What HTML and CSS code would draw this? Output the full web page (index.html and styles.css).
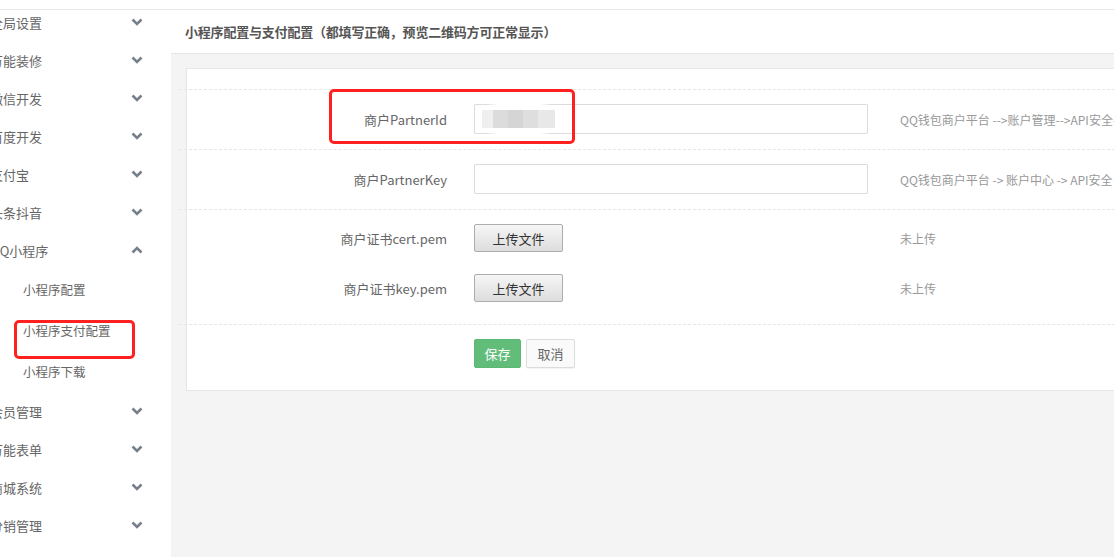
FILE: index.html
```html
<!DOCTYPE html>
<html lang="zh-CN">
<head>
    <meta charset="UTF-8">
    <title>小程序支付配置</title>
    <link rel="stylesheet" href="styles.css">
</head>
<body>
<div class="topbar"></div>
<div class="layout">
    <aside class="sidebar">
        <ul class="menu">
            <li class="menu-item"><span class="menu-label">全局设置</span><svg class="arrow" viewBox="0 0 12 8"><polyline points="1.5,1.5 6,6 10.5,1.5"/></svg></li>
            <li class="menu-item"><span class="menu-label">万能装修</span><svg class="arrow" viewBox="0 0 12 8"><polyline points="1.5,1.5 6,6 10.5,1.5"/></svg></li>
            <li class="menu-item"><span class="menu-label">微信开发</span><svg class="arrow" viewBox="0 0 12 8"><polyline points="1.5,1.5 6,6 10.5,1.5"/></svg></li>
            <li class="menu-item"><span class="menu-label">百度开发</span><svg class="arrow" viewBox="0 0 12 8"><polyline points="1.5,1.5 6,6 10.5,1.5"/></svg></li>
            <li class="menu-item"><span class="menu-label">支付宝</span><svg class="arrow" viewBox="0 0 12 8"><polyline points="1.5,1.5 6,6 10.5,1.5"/></svg></li>
            <li class="menu-item"><span class="menu-label">头条抖音</span><svg class="arrow" viewBox="0 0 12 8"><polyline points="1.5,1.5 6,6 10.5,1.5"/></svg></li>
            <li class="menu-item"><span class="menu-label">QQ小程序</span><svg class="arrow" viewBox="0 0 12 8"><polyline points="1.5,6.5 6,2 10.5,6.5"/></svg></li>
            <li class="sub-item">小程序配置</li>
            <li class="sub-item">小程序支付配置</li>
            <li class="sub-item">小程序下载</li>
            <li class="menu-item"><span class="menu-label">会员管理</span><svg class="arrow" viewBox="0 0 12 8"><polyline points="1.5,1.5 6,6 10.5,1.5"/></svg></li>
            <li class="menu-item"><span class="menu-label">万能表单</span><svg class="arrow" viewBox="0 0 12 8"><polyline points="1.5,1.5 6,6 10.5,1.5"/></svg></li>
            <li class="menu-item"><span class="menu-label">商城系统</span><svg class="arrow" viewBox="0 0 12 8"><polyline points="1.5,1.5 6,6 10.5,1.5"/></svg></li>
            <li class="menu-item"><span class="menu-label">分销管理</span><svg class="arrow" viewBox="0 0 12 8"><polyline points="1.5,1.5 6,6 10.5,1.5"/></svg></li>
        </ul>
    </aside>

    <main class="main">
        <div class="page-head">小程序配置与支付配置（都填写正确，预览二维码方可正常显示）</div>
        <div class="content">
            <div class="panel">
                <div class="form">
                    <div class="row">
                        <label class="label">商户PartnerId</label>
                        <div class="control">
                            <div class="input-wrap">
                                <input class="input" type="text">
                                <div class="blur">
                                    <span class="blur-cell c1"></span>
                                    <span class="blur-cell c2"></span>
                                    <span class="blur-cell c3"></span>
                                    <span class="blur-cell c4"></span>
                                    <span class="blur-cell c5"></span>
                                </div>
                            </div>
                        </div>
                        <div class="help">QQ钱包商户平台 --&gt;账户管理--&gt;API安全--&gt;操作证书</div>
                    </div>
                    <div class="row">
                        <label class="label">商户PartnerKey</label>
                        <div class="control"><input class="input" type="text"></div>
                        <div class="help">QQ钱包商户平台 -&gt; 账户中心 -&gt; API安全 -&gt; API密钥</div>
                    </div>
                    <div class="row row-file">
                        <label class="label">商户证书cert.pem</label>
                        <div class="control"><button class="btn-upload">上传文件</button></div>
                        <div class="help">未上传</div>
                    </div>
                    <div class="row row-file row-last">
                        <label class="label">商户证书key.pem</label>
                        <div class="control"><button class="btn-upload">上传文件</button></div>
                        <div class="help">未上传</div>
                    </div>
                    <div class="row row-actions">
                        <div class="label"></div>
                        <div class="control">
                            <button class="btn-save">保存</button>
                            <button class="btn-cancel">取消</button>
                        </div>
                    </div>
                </div>
            </div>
        </div>
    </main>
</div>

<div class="mark mark-field"></div>
<div class="mark mark-menu"></div>
</body>
</html>
```

FILE: styles.css
```css
* {
    box-sizing: border-box;
}

body {
    margin: 0;
    width: 1114px;
    height: 557px;
    overflow: hidden;
    position: relative;
    background: #f4f4f4;
    color: #666;
    font-family: "Noto Sans CJK SC", "Noto Sans", sans-serif;
    font-size: 13px;
}

.topbar {
    height: 10px;
    background: #fff;
    border-bottom: 1px solid #e6e6e6;
}

.layout {
    display: flex;
    height: 547px;
}

.sidebar {
    width: 171px;
    flex: none;
    background: #fff;
    overflow: hidden;
}

.menu {
    list-style: none;
    margin: -7px 0 0;
    padding: 0;
}

.menu-item {
    display: flex;
    align-items: center;
    justify-content: space-between;
    height: 38px;
    padding-right: 28px;
}

.menu-label {
    margin-left: -10px;
    white-space: nowrap;
    line-height: 1;
}

.arrow {
    width: 12px;
    height: 8px;
    fill: none;
    stroke: #77808a;
    stroke-width: 2.6;
}

.sub-item {
    height: 41px;
    line-height: 41px;
    padding-left: 23px;
    font-size: 12.5px;
}

.main {
    flex: 1;
    min-width: 0;
    overflow: hidden;
}

.page-head {
    height: 44px;
    background: #fff;
    border-bottom: 1px solid #e5e5e5;
    padding-left: 14px;
    display: flex;
    align-items: center;
    font-weight: bold;
    color: #555;
    white-space: nowrap;
    letter-spacing: -0.2px;
}

.content {
    padding: 14px 0 0 15px;
}

.panel {
    width: 1000px;
    background: #fff;
    border: 1px solid #e6e6e6;
    padding: 20px 0 22px;
}

.form {
    margin-left: -8px;
}

.row {
    display: flex;
    align-items: center;
    border-top: 1px dashed #e6e6e6;
    padding: 14px 0 15px;
}

.row-file {
    padding-bottom: 11px;
}

.row-last {
    border-top: none;
    padding-top: 11px;
    padding-bottom: 22px;
}

.row-actions {
    padding-bottom: 0;
}

.label {
    width: 268px;
    flex: none;
    text-align: right;
    line-height: 1;
}

.control {
    width: 394px;
    flex: none;
    margin-left: 27px;
    display: flex;
}

.help {
    margin-left: 32px;
    color: #999;
    font-size: 12px;
    white-space: nowrap;
}

.input-wrap {
    position: relative;
    width: 100%;
}

.input {
    display: block;
    width: 394px;
    height: 30px;
    border: 1px solid #dcdcdc;
    border-radius: 1px;
    outline: none;
}

.blur {
    position: absolute;
    left: 2px;
    top: -6px;
    width: 86px;
    height: 42px;
    display: flex;
    align-items: center;
    padding-left: 6px;
    background: radial-gradient(ellipse at center, #fff 60%, rgba(255, 255, 255, 0) 72%);
}

.blur-cell {
    height: 18px;
}

.c1 { width: 11px; background: #efefef; }
.c2 { width: 15px; background: #dcdcdc; }
.c3 { width: 15px; background: #d5d5d5; }
.c4 { width: 15px; background: #dedede; }
.c5 { width: 17px; background: #e8e8e8; }

.btn-upload {
    width: 89px;
    height: 28px;
    padding: 0;
    border: 1px solid #adadad;
    border-radius: 2px;
    background: linear-gradient(#f6f6f6, #dddddd);
    color: #333;
    font-family: inherit;
    font-size: 13px;
}

.btn-save {
    width: 47px;
    height: 29px;
    padding: 0;
    border: 1px solid #5cb974;
    border-radius: 2px;
    background: #63bd7a;
    color: #fff;
    font-family: inherit;
    font-size: 13px;
}

.btn-cancel {
    width: 49px;
    height: 29px;
    margin-left: 5px;
    padding: 0;
    border: 1px solid #dcdcdc;
    border-radius: 2px;
    background: #fafafa;
    color: #666;
    font-family: inherit;
    font-size: 13px;
    box-shadow: 0 1px 1px rgba(0, 0, 0, 0.05);
}

.mark {
    position: absolute;
    border: 3px solid #ff2020;
    border-radius: 5px;
}

.mark-field {
    left: 329px;
    top: 89px;
    width: 246px;
    height: 55px;
}

.mark-menu {
    left: 14px;
    top: 320px;
    width: 121px;
    height: 39px;
}
```
